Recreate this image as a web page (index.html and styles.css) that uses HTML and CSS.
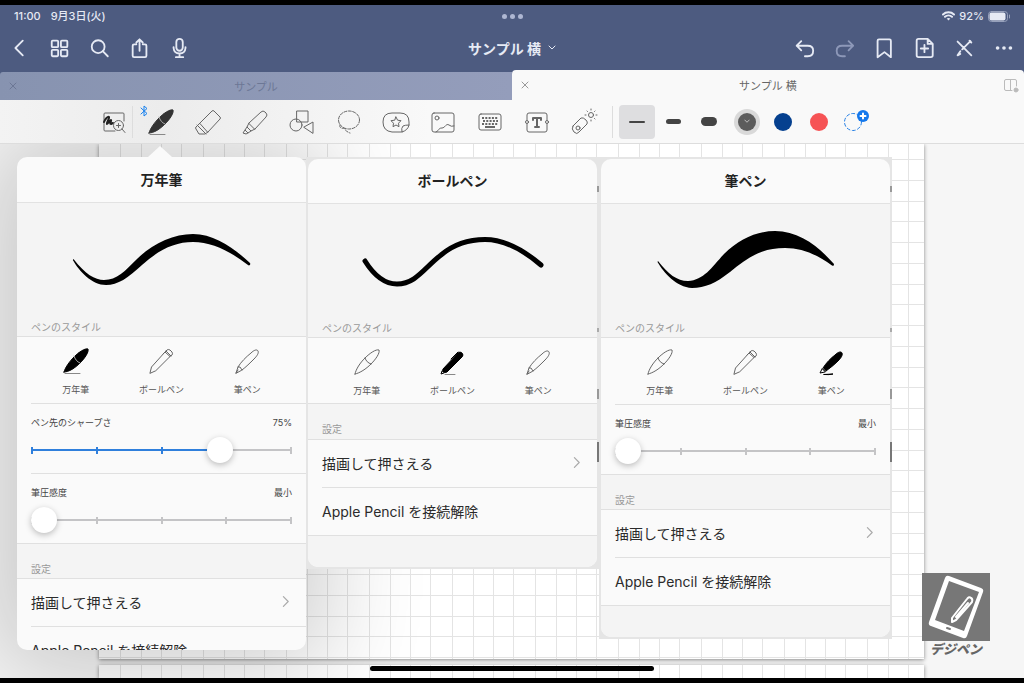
FILE: index.html
```html
<!DOCTYPE html>
<html lang="ja">
<head>
<meta charset="utf-8">
<meta name="viewport" content="width=device-width, initial-scale=1">
<title>サンプル 横</title>
<link rel="stylesheet" href="styles.css">
</head>
<body>
<svg class="symbols" aria-hidden="true">
  <symbol id="fountain" viewBox="0 0 28 28"><path d="M2 26C3 21 7 15 12 10C17 5 23 1 26 2C27 5 23 11 18 16C13 21 7 25 2 26ZM12 10C13 13 15 15 18 16"/></symbol>
  <symbol id="fountain-fill" viewBox="0 0 28 28"><path class="solid" d="M2 25C3 21 7 15 12 10C17 5 23 1 26 2C27 5 23 11 18 16C13 21 7 25 2 25Z"/><path class="split" d="M12 9C13 12 15 15 18 16"/><path class="ground" d="M3 26.500H18"/></symbol>
  <symbol id="ball" viewBox="0 0 28 28"><path d="M3 26L4.500 20L18 5L23 9.500L9 23.500ZM16 7L20 3Q21 2 23 3L25 5Q26 7 25 8L23 9.500M19 4L24 9"/></symbol>
  <symbol id="ball-fill" viewBox="0 0 28 28"><path class="solid" d="M5 21L20 5Q22 3 24 5Q26 7 24 9L9 24Q7 25 5 24Z"/><path d="M4 23L3 26L6 25M13 11L20 4"/><path class="ground" d="M7 26.500H17"/></symbol>
  <symbol id="brush" viewBox="0 0 28 28"><path d="M3 26L5 20C8 15 13 10 18 6C21 3 24 2 25 4C26 6 24 9 21 12C17 16 13 20 9 23ZM5 20L7 20L9 23M3 26L5 23"/></symbol>
  <symbol id="brush-fill" viewBox="0 0 28 28"><path class="solid" d="M6 20C9 15 14 10 18 7C21 4 24 3 25 5C26 7 24 10 21 13C17 17 13 20 9 23Z"/><path d="M5 21L3 25L8 24Z"/><path class="solid" d="M7 26.500L16 26Q12 27 7 26.500Z"/></symbol>
  <symbol id="chevron" viewBox="0 0 10 14"><path d="M2 3L6 7L2 11"/></symbol>
  <symbol id="close" viewBox="0 0 10 10"><path d="M2 2L8 8M8 2L2 8"/></symbol>
</svg>

<div class="screen">
  <header class="top">
    <div class="status">
      <div class="status-left"><span>11:00</span><span class="date">9月3日(火)</span></div>
      <button class="multitask" aria-label="マルチタスク"><i></i><i></i><i></i></button>
      <div class="status-right">
        <svg width="13" height="10" viewBox="0 0 13 10" class="wifi"><path d="M1 3.500C4 .6 9 .6 12 3.500M3 5.800C5 4 8 4 10 5.800"/><path d="M6.500 9.500L4.700 7.600C5.800 6.700 7.200 6.700 8.300 7.600Z" class="dot"/></svg>
        <span>92%</span>
        <svg width="22" height="11" viewBox="0 0 22 11" class="battery"><rect x=".5" y=".5" width="19" height="10" rx="3"/><rect x="1.500" y="1.500" width="16" height="8" rx="2" class="dot"/><path d="M21.500 4V7"/></svg>
      </div>
    </div>
    <nav class="nav">
      <div class="nav-group">
        <button aria-label="戻る"><svg width="24" height="24" viewBox="0 0 24 24"><path d="M15 4L7 12L15 20"/></svg></button>
        <button aria-label="サムネール"><svg width="24" height="24" viewBox="0 0 24 24"><rect x="3" y="4" width="7" height="7" rx="1"/><rect x="13" y="4" width="7" height="7" rx="1"/><rect x="3" y="14" width="7" height="7" rx="1"/><rect x="13" y="14" width="7" height="7" rx="1"/></svg></button>
        <button aria-label="検索"><svg width="24" height="24" viewBox="0 0 24 24"><circle cx="10" cy="10.500" r="7"/><path d="M15 15.500L20.500 21"/></svg></button>
        <button aria-label="共有"><svg width="24" height="24" viewBox="0 0 24 24"><path d="M8 8H5.500Q4 8 4 9.500V20.500Q4 22 5.500 22H17.500Q19 22 19 20.500V9.500Q19 8 17.500 8H15M11.500 15V2.500M8 6L11.500 2.500L15 6"/></svg></button>
        <button aria-label="録音"><svg width="24" height="24" viewBox="0 0 24 24"><rect x="8" y="2" width="7" height="13" rx="3.500"/><path d="M5 11V12Q5.500 18 11.500 18Q17.500 18 18 12V11M11.500 18V22M7.500 22H15.500"/></svg></button>
      </div>
      <button class="doc-title"><span>サンプル 横</span><svg width="8" height="6" viewBox="0 0 8 6"><path d="M1 1L4 4L7 1"/></svg></button>
      <div class="nav-group right">
        <button aria-label="取り消す"><svg width="24" height="24" viewBox="0 0 24 24"><path d="M9 4.500L4 9.500L9 14.500M4 9.500H16Q22 9.500 22 15Q22 21 16 21H13"/></svg></button>
        <button aria-label="やり直す" class="faded"><svg width="24" height="24" viewBox="0 0 24 24"><path d="M17 4.500L22 9.500L17 14.500M22 9.500H10Q4 9.500 4 15Q4 21 10 21H13"/></svg></button>
        <button aria-label="ブックマーク"><svg width="24" height="24" viewBox="0 0 24 24"><path d="M5 4Q5 2.500 6.500 2.500H18Q19.500 2.500 19.500 4V22L12.500 16.500L5 22Z"/></svg></button>
        <button aria-label="ページを追加"><svg width="24" height="24" viewBox="0 0 24 24"><path d="M16 2H6Q4 2 4 4V20Q4 22 6 22H19.500Q21.500 22 21.500 20V7.500ZM16 2V7.500H21.500M12.500 8.500V16.500M8.500 12.500H16.500"/></svg></button>
        <button aria-label="閲覧モード"><svg width="24" height="24" viewBox="0 0 24 24"><path d="M5 5L20 20M19 4.500L10 13.500M8 15.500L5 20L8 18.500M18 4L20 6"/></svg></button>
        <button aria-label="その他"><svg width="24" height="24" viewBox="0 0 24 24" class="more"><circle cx="5" cy="12" r="2"/><circle cx="12" cy="12" r="2"/><circle cx="19" cy="12" r="2"/></svg></button>
      </div>
    </nav>
    <div class="tabs">
      <div class="tab"><button aria-label="閉じる"><svg width="10" height="10"><use href="#close"/></svg></button><span>サンプル</span></div>
      <div class="tab active"><button aria-label="閉じる"><svg width="10" height="10"><use href="#close"/></svg></button><span>サンプル 横</span><button aria-label="分割表示"><svg width="16" height="15" viewBox="0 0 16 15"><path d="M9 12.500H3Q1.500 12.500 1.500 11V3Q1.500 1.500 3 1.500H12Q13.500 1.500 13.500 3V8M7.500 1.500V12.500"/><circle cx="13" cy="12" r="2" class="badge"/></svg></button></div>
    </div>
  </header>

  <div class="toolbar">
    <button class="zoom-tool" aria-label="拡大"><svg width="24" height="24" viewBox="0 0 24 24"><path d="M13 21H3Q2 21 2 20V4Q2 3 3 3H21Q22 3 22 4V11"/><path class="heavy" d="M2 12C3 9 6 6 7 7C8 8 4 13 5 14C6 14 8 10 9 10C10 11 7 14 9 14L11 13"/><circle cx="16.500" cy="15.500" r="5"/><path d="M20 19L23 22.500M14.500 15.500H18.500M16.500 13.500V17.500"/></svg></button>
    <hr>
    <button class="pen-tool" aria-label="ペン"><svg class="bluetooth" width="8" height="12" viewBox="0 0 8 12"><path d="M1 3L7 8.500L4 11V1L7 3.500L1 9"/></svg><svg width="28" height="28"><use href="#fountain-fill"/></svg></button>
    <button aria-label="消しゴム"><svg width="28" height="28" viewBox="0 0 28 28"><path d="M6 15L18 3Q19 2 20 3L26 9Q27 10 26 11L14 24ZM6 15L2 19Q1 20 2 21L5 26H11L14 24M3 17L12 26"/></svg></button>
    <button aria-label="蛍光ペン"><svg width="28" height="28" viewBox="0 0 28 28"><path d="M8 15L20 4Q22 2 24 4L25 5Q27 7 25 9L14 21ZM8 15L6 19L10 23L14 21M6 19L4 22L7 25L10 23M4 22L2 25L5 26L7 25"/></svg></button>
    <button aria-label="図形"><svg width="28" height="28" viewBox="0 0 28 28"><rect x="9" y="3" width="11" height="11"/><circle cx="8" cy="17" r="6"/><path d="M16 19L25 14V25Z"/></svg></button>
    <button aria-label="なげなわ"><svg width="28" height="28" viewBox="0 0 28 28"><ellipse cx="14" cy="12" rx="10.500" ry="9" stroke-dasharray="3 1.500"/><path stroke-dasharray="3 1.500" d="M5 17C4 19 6 21 9 20C10 22 12 24 15 25"/></svg></button>
    <button aria-label="ステッカー"><svg width="28" height="28" viewBox="0 0 28 28"><path d="M20 24H10Q1 23 1 14Q1 5 10 5H18Q27 5 27 14V17Q26 22 20 24Q19 20 21 18Q23 17 27 17M14 9L15.600 12.200L19 12.700L16.500 15.200L17 18.700L14 17L11 18.700L11.500 15.200L9 12.700L12.400 12.200Z"/></svg></button>
    <button aria-label="画像"><svg width="28" height="28" viewBox="0 0 28 28"><rect x="3" y="5" width="22" height="19" rx="2"/><circle cx="8" cy="10" r="2"/><path d="M7 24C11 22 9 20 13 20C16 20 17 15 20 17Q22 19 25 18"/></svg></button>
    <button aria-label="キーボード"><svg width="28" height="28" viewBox="0 0 28 28"><rect x="3" y="6" width="22" height="16" rx="2"/><path class="keys" stroke-dasharray="2 1.300" d="M6 10H22M7 13H22M6 16H22"/><path class="keys" d="M9 19H19"/></svg></button>
    <button aria-label="テキスト"><svg width="28" height="28" viewBox="0 0 28 28"><path d="M4 12V7Q4 5 6 5H22Q24 5 24 7V12M4 16V22Q4 24 6 24H22Q24 24 24 22V16"/><circle cx="4" cy="14" r="1.500"/><circle cx="24" cy="14" r="1.500"/><path class="letter" d="M10 12V10H18V12M14 10V19M12 19H16"/></svg></button>
    <button aria-label="レーザー"><svg width="28" height="28" viewBox="0 0 28 28"><path d="M3 18L11 10Q13 9 16 12Q18 14 17 16L9 24Q7 27 4 24Q1 21 3 18Z"/><circle cx="8" cy="20" r="2"/><circle cx="21" cy="7" r="2.500"/><path d="M21 1V2M21 12V13M15 7H16M26 7H27M17 3L17.500 3.500M24.500 10.500L25 11M24.500 3.500L25 3"/></svg></button>
    <hr>
    <button class="width-tool selected" aria-label="細い線"><i class="thin"></i></button>
    <button class="width-tool" aria-label="中くらいの線"><i class="medium"></i></button>
    <button class="width-tool" aria-label="太い線"><i class="thick"></i></button>
    <div class="colors">
      <button class="width-tool" aria-label="グレー"><i class="ink gray"><svg width="6" height="5" viewBox="0 0 8 6"><path d="M1 1L4 4L7 1"/></svg></i></button>
      <button class="width-tool" aria-label="青"><i class="ink blue"></i></button>
      <button class="width-tool" aria-label="赤"><i class="ink red"></i></button>
      <button class="width-tool add" aria-label="色を追加"><svg width="28" height="28" viewBox="0 0 28 28"><circle cx="12" cy="14" r="8.500" stroke-dasharray="3 2.500"/><circle cx="22" cy="8" r="6" class="plus-bg"/><path class="plus" d="M22 5.500V10.500M19.500 8H24.500"/></svg></button>
    </div>
  </div>

  <main class="canvas">
    <div class="paper-stack"><div class="paper"></div><div class="paper next"></div></div>

    <div class="popovers">
      <section class="panel first">
        <h2>万年筆</h2>
        <div class="preview">
          <svg width="184" height="62" viewBox="0 0 184 62"><path d="M3.500 30C15 45 25 51 34 51C47 51 55 42 67 30C82 15 103 5 123 5C145 5 165 20 180 34C181 36 179 37 178 36C160 22 142 13 123 13C105 13 90 20 72 36C58 49 48 56 36 56C22 56 9 42 2.800 31Z"/></svg>
          <h3>ペンのスタイル</h3>
        </div>
        <div class="styles">
          <button aria-pressed="true"><svg width="28" height="28"><use href="#fountain-fill"/></svg>万年筆</button>
          <button><svg width="28" height="28"><use href="#ball"/></svg>ボールペン</button>
          <button><svg width="28" height="28"><use href="#brush"/></svg>筆ペン</button>
        </div>
        <div class="slider">
          <label for="sharp">ペン先のシャープさ</label><output for="sharp">75%</output>
          <input id="sharp" class="filled" type="range" min="0" max="100" value="75">
        </div>
        <div class="slider">
          <label for="pressure-a">筆圧感度</label><output for="pressure-a">最小</output>
          <input id="pressure-a" type="range" min="0" max="4" value="0">
        </div>
        <h3 class="section">設定</h3>
        <button class="row"><span>描画して押さえる</span><svg width="10" height="14"><use href="#chevron"/></svg></button>
        <button class="row last"><span>Apple Pencil を接続解除</span></button>
      </section>

      <div class="backdrop">
        <section class="panel">
          <h2>ボールペン</h2>
          <div class="preview">
            <svg width="184" height="62" viewBox="0 0 184 62"><path class="line" d="M4 31C14 47 24 54 36 54C55 54 64 37 80 25C93 14 108 9.500 124 9.500C146 9.500 166 23 180 35"/></svg>
            <h3>ペンのスタイル</h3>
          </div>
          <div class="styles end">
            <button><svg width="28" height="28"><use href="#fountain"/></svg>万年筆</button>
            <button aria-pressed="true"><svg width="28" height="28"><use href="#ball-fill"/></svg>ボールペン</button>
            <button><svg width="28" height="28"><use href="#brush"/></svg>筆ペン</button>
          </div>
          <h3 class="section">設定</h3>
          <button class="row"><span>描画して押さえる</span><svg width="10" height="14"><use href="#chevron"/></svg></button>
          <button class="row last"><span>Apple Pencil を接続解除</span></button>
          <div class="foot"></div>
        </section>
      </div>

      <div class="backdrop">
        <section class="panel">
          <h2>筆ペン</h2>
          <div class="preview">
            <svg width="184" height="62" viewBox="0 0 184 62"><path d="M4 31C14 44 23 51 34 51C50 50 57 38 70 24C85 9 103 1 121 1C145 1 164 16 180 34C180 36 179 36 178 35.500C162 24 148 18 131 18C108 18 94 27 76 42C62 53 51 58 38 58C22 57 10 43 3.500 32Z"/></svg>
            <h3>ペンのスタイル</h3>
          </div>
          <div class="styles">
            <button><svg width="28" height="28"><use href="#fountain"/></svg>万年筆</button>
            <button><svg width="28" height="28"><use href="#ball"/></svg>ボールペン</button>
            <button aria-pressed="true"><svg width="28" height="28"><use href="#brush-fill"/></svg>筆ペン</button>
          </div>
          <div class="slider">
            <label for="pressure-b">筆圧感度</label><output for="pressure-b">最小</output>
            <input id="pressure-b" type="range" min="0" max="4" value="0">
          </div>
          <h3 class="section">設定</h3>
          <button class="row"><span>描画して押さえる</span><svg width="10" height="14"><use href="#chevron"/></svg></button>
          <button class="row last"><span>Apple Pencil を接続解除</span></button>
          <div class="foot"></div>
        </section>
      </div>
    </div>

    <div class="logo">
      <svg width="68" height="68" viewBox="0 0 68 68"><rect width="68" height="68" class="plate"/><path fill-rule="evenodd" class="tablet" d="M27 3L59 15Q62 16 61 19L45 63Q44 66 41 65L9 53Q6 52 7 49L23 5Q24 2 27 3ZM27 8L13 47L42 58L57 19Z"/><path class="home" d="M25 55L28 56"/><path class="stylus" d="M45 26Q47 23 49 25Q51 26 50 29L34 47L30 49L30 45ZM46 30L34 44"/></svg>
      <span>デジペン</span>
    </div>
    <div class="home-bar"></div>
  </main>
</div>
</body>
</html>
```

FILE: styles.css
```css
* { box-sizing: border-box; }

body {
  margin: 0;
  background: #000;
  color: #2b2b2b;
  font-family: Inter, "Noto Sans CJK JP", sans-serif;
}

button {
  display: flex;
  align-items: center;
  justify-content: center;
  margin: 0;
  padding: 0;
  border: 0;
  background: none;
  color: inherit;
  font: inherit;
}

svg {
  display: block;
  flex: none;
  fill: none;
  stroke: currentColor;
  stroke-linecap: round;
  stroke-linejoin: round;
}

.symbols { position: absolute; width: 0; height: 0; }
.solid { fill: currentColor; }
.split { stroke: #aaa; }
.ground { stroke: #888; }

.screen {
  display: flex;
  flex-direction: column;
  height: 100vh;
  border: solid #000;
  border-width: 5px 0;
  overflow: hidden;
}

/* Header */
.top { background: #4d5b80; color: #e6eaf4; }

.status {
  display: grid;
  grid-template-columns: 1fr auto 1fr;
  align-items: center;
  height: 22px;
  padding: 0 14px;
  font-size: 11px;
  font-weight: 500;
}
.status-left { display: flex; align-items: center; gap: 10px; line-height: 16px; }
.status-right { display: flex; align-items: center; justify-content: flex-end; gap: 4px; }
.wifi { stroke-width: 2; }
.dot { fill: currentColor; stroke: none; }
.battery rect:first-child, .battery path { stroke: #97a1bb; }
.multitask { gap: 3px; }
.multitask i { width: 5px; height: 5px; border-radius: 50%; background: #aeb7d2; }

.nav {
  display: grid;
  grid-template-columns: 1fr auto 1fr;
  align-items: center;
  height: 43px;
  padding-bottom: 1px;
}
.nav-group { display: flex; }
.nav-group button { width: 40px; height: 42px; }
.nav-group svg { width: 22px; height: 22px; stroke-width: 2; }
.right { justify-content: flex-end; }
.faded { color: #8d98b8; }
.nav .more { fill: currentColor; stroke: none; }
.doc-title { gap: 7px; font-size: 14px; font-weight: 700; }

.tabs { display: grid; grid-template-columns: 1fr 1fr; align-items: end; }
.tab {
  display: grid;
  grid-template-columns: 26px 1fr 26px;
  align-items: center;
  height: 28px;
  border-radius: 3px 0 0 0;
  background: linear-gradient(90deg, #8793b0, #949dbb);
  color: #6c7795;
  font-size: 11px;
  text-align: center;
}
.tab button { height: 28px; }
.tab.active {
  height: 30px;
  border-radius: 4px 4px 0 0;
  background: #f9f9f9;
  color: #666;
}
.tab.active button { color: #999; }
.tab.active button:last-child { color: #bbb; }
.badge { fill: currentColor; }

/* Toolbar */
.toolbar {
  display: flex;
  align-items: center;
  height: 44px;
  flex: none;
  padding-left: 97px;
  border-bottom: 1px solid #ddd;
  background: linear-gradient(90deg, #f3f3f3, #ececec 16%, #f9f9f9 42%);
  color: #666;
}
.toolbar hr { width: 1px; height: 32px; margin: 0 4px 0 1px; border: 0; background: #ddd; }
.toolbar > hr:nth-of-type(2) { margin: 0 6px 0 5px; }
.toolbar > button { width: 47px; height: 40px; }
.toolbar > .zoom-tool { width: 34px; }
.heavy { stroke: #222; stroke-width: 2; }
.keys { stroke-width: 2; stroke-linecap: butt; }
.letter { stroke-width: 2; }
.pen-tool { position: relative; color: #333; }
.bluetooth { position: absolute; top: 5px; left: 3px; color: #1680ee; }
.toolbar > .pen-tool { height: 44px; }
.toolbar > .width-tool, .width-tool { width: 36px; height: 34px; border-radius: 4px; }
.selected { background: #dedee0; }
.toolbar i { display: flex; align-items: center; justify-content: center; border-radius: 5px; background: #444; }
.toolbar .thin { width: 16px; height: 2px; }
.toolbar .medium { width: 15px; height: 5px; }
.toolbar .thick { width: 16px; height: 9px; }
.colors { display: flex; padding-left: 2px; }
.toolbar .ink { width: 18px; height: 18px; border-radius: 50%; }
.toolbar .gray { background: #5c5c5c; color: #ddd; box-shadow: 0 0 0 4px #d9d9d9; }
.toolbar .blue { background: #05408f; }
.toolbar .red { background: #f65355; }
.add { color: #2680e5; }
.plus-bg { fill: #1478ec; stroke: none; }
.plus { stroke: #fff; stroke-width: 2; }

/* Canvas */
.canvas { position: relative; flex: 1; min-height: 0; overflow: hidden; background: #f6f6f6; }
.paper-stack {
  position: absolute;
  inset: 0 100px 0 99px;
  display: flex;
  flex-direction: column;
  gap: 6px;
}
.paper {
  flex: 1;
  background:
    repeating-linear-gradient(90deg, transparent 0 21px, #e4e4e4 21px 22px, transparent 22px 42px, #e4e4e4 42px 43px, transparent 43px 62px, #e4e4e4 62px 63px, transparent 63px 82px, #e4e4e4 82px 83px),
    repeating-linear-gradient(180deg, transparent 0 15px, #e4e4e4 15px 16px, transparent 16px 36px, #e4e4e4 36px 37px, transparent 37px 57px, #e4e4e4 57px 58px, transparent 58px 77px, #e4e4e4 77px 78px, transparent 78px 83px),
    #fff;
  box-shadow: 0 1px 4px rgba(0, 0, 0, .45);
}
.next { flex: 0 0 13px; }

.popovers {
  position: relative;
  display: flex;
  align-items: flex-start;
  height: 100%;
  padding: 13px 17px 28px;
}
.backdrop {
  flex: none;
  padding: 2px;
  position: relative;
  background:
    linear-gradient(#999, #999) right 29px / 2px 6px no-repeat,
    linear-gradient(#aaa, #aaa) right 171px / 2px 4px no-repeat,
    linear-gradient(#999, #999) right 232px / 2px 10px no-repeat,
    linear-gradient(#777, #777) right 285px / 2px 20px no-repeat,
    #e5e5e5;
}
.panel {
  flex: none;
  width: 289px;
  border-radius: 10px;
  background: #fafafa;
  overflow: hidden;
}
.first {
  max-height: 100%;
  box-shadow: 0 0 100px 20px rgba(0, 0, 0, .2);
}
.popovers::before {
  content: "";
  position: absolute;
  top: 2px;
  left: 148px;
  z-index: 1;
  border: solid transparent;
  border-width: 0 12px 11px;
  border-bottom-color: #fafafa;
}
.panel h2 {
  display: flex;
  align-items: center;
  justify-content: center;
  height: 45px;
  margin: 0;
  padding-bottom: 2px;
  border-bottom: 1px solid #e2e2e2;
  color: #222;
  font-size: 14px;
  font-weight: 700;
}
.first h2 { height: 46px; }
.preview {
  display: flex;
  flex-direction: column;
  justify-content: space-between;
  height: 134px;
  padding: 26px 14px 0 53px;
  border-bottom: 1px solid #e0e0e0;
  background: #f4f4f4;
}
.preview svg { color: #000; fill: #000; stroke: none; }
.preview .line { fill: none; stroke: #000; stroke-width: 5; }
.panel h3 { margin: 0; color: #999; font-size: 10px; font-weight: 400; line-height: 18px; }
.preview h3 { margin-left: -39px; }
.styles {
  display: grid;
  grid-template-columns: repeat(3, 1fr);
  height: 66px;
  padding: 0 16px;
}
.styles button { flex-direction: column; justify-content: flex-start; gap: 8px; padding-top: 10px; color: #555; font-size: 9px; line-height: 14px; }
.styles svg { color: #666; }
.styles [aria-pressed] svg { color: #000; }
.styles.end { border-bottom: 1px solid #e0e0e0; }
.slider {
  display: grid;
  grid-template-columns: 1fr auto;
  align-content: start;
  height: 70px;
  margin-left: 14px;
  padding: 9px 14px 0 0;
  border-top: 1px solid #e0e0e0;
  color: #444;
  font-size: 9px;
  line-height: 20px;
}
.slider input {
  --tick: linear-gradient(#c4c4c6, #c4c4c6);
  --on: var(--tick);
  grid-column: 1 / -1;
  width: 100%;
  height: 34px;
  margin: 0;
  appearance: none;
  background:
    var(--on) 0 50% / 2px 7px no-repeat,
    var(--on) 25% 50% / 2px 7px no-repeat,
    var(--on) 50% 50% / 2px 7px no-repeat,
    var(--tick) 75% 50% / 2px 7px no-repeat,
    var(--tick) 100% 50% / 2px 7px no-repeat,
    var(--on) 0 50% / 75% 2px no-repeat,
    var(--tick) 0 50% / 100% 2px no-repeat;
}
.slider .filled { --on: linear-gradient(#2f7fdc, #2f7fdc); }
.slider input::-webkit-slider-thumb {
  appearance: none;
  width: 26px;
  height: 26px;
  border-radius: 50%;
  background: #fff;
  box-shadow: 0 2px 6px rgba(0, 0, 0, .25);
}
.panel .section {
  height: 36px;
  padding: 16px 14px 0;
  border: solid #e0e0e0;
  border-width: 1px 0;
  background: #f4f4f4;
}
.styles.end + .section { border-top: 0; }
.row {
  justify-content: space-between;
  width: calc(100% - 14px);
  height: 47px;
  margin-left: 14px;
  padding: 0 13px 2px 0;
  font-size: 14px;
}
.row svg { color: #aaa; }
.row svg { width: 12px; height: 17px; }
.last { height: 48px; border-top: 1px solid #e0e0e0; }
.foot { height: 32px; border-top: 1px solid #e0e0e0; background: #f4f4f4; }

.logo {
  position: absolute;
  right: 34px;
  bottom: 20px;
  display: flex;
  flex-direction: column;
  align-items: center;
  color: #666;
  font-size: 13px;
  font-style: italic;
  font-weight: 900;
  line-height: 17px;
}
.plate { fill: #777; stroke: none; }
.tablet { fill: #fff; stroke: none; }
.home { stroke: #777; stroke-width: 2; }
.stylus { stroke: #fff; stroke-width: 2; }

.home-bar {
  position: absolute;
  bottom: 7px;
  left: 50%;
  width: 284px;
  height: 5px;
  border-radius: 3px;
  background: #000;
  transform: translateX(-50%);
}
```
